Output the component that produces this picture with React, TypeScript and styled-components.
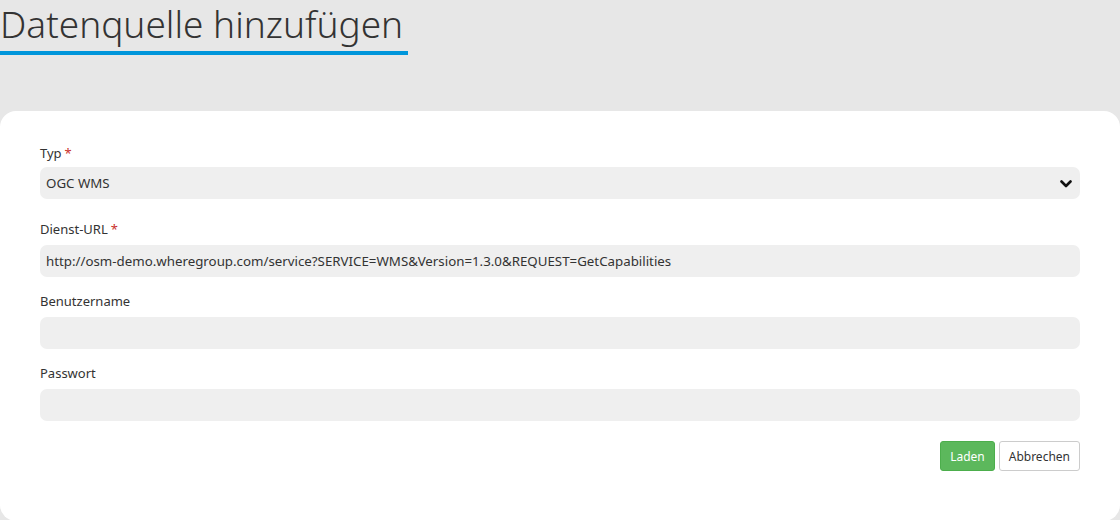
import React from "react";
import styled, { createGlobalStyle } from "styled-components";

const Global = createGlobalStyle`
  html, body { margin: 0; padding: 0; }
  body {
    background: #e7e7e7;
    font-family: "Noto Sans", "Open Sans", sans-serif;
    color: #333;
  }
`;

const Page = styled.div`
  display: flex;
  flex-direction: column;
  align-items: flex-start;
  min-height: 520px;
`;

const TitleWrap = styled.div`
  width: 408px;
  border-bottom: 4px solid #0096db;
`;

const Title = styled.h1`
  margin: 0;
  font-family: "Noto Sans", sans-serif;
  font-weight: 300;
  font-size: 37px;
  line-height: 48px;
  padding-bottom: 3px;
  color: #333;
  white-space: nowrap;
`;

const Card = styled.div`
  align-self: stretch;
  margin-top: 56px;
  background: #fff;
  border-radius: 16px;
  padding: 32px 40px 50px;
  display: flex;
  flex-direction: column;
  gap: 14px;
`;

const Group = styled.div<{ $extra?: number }>`
  display: flex;
  flex-direction: column;
  margin-bottom: ${(p) => p.$extra ?? 0}px;
`;

const Label = styled.label<{ $gap?: number }>`
  font-size: 13px;
  line-height: 20px;
  color: #333;
  margin-bottom: ${(p) => p.$gap ?? 6}px;
`;

const Star = styled.span`
  color: #c9302c;
  margin-left: 3px;
`;

const Field = styled.div`
  position: relative;
  height: 32px;
  background: #efefef;
  border-radius: 7px;
  display: flex;
  align-items: center;
  padding: 0 6px;
  font-size: 13.3px;
  color: #333;
  white-space: nowrap;
`;

const Chevron = styled.svg`
  position: absolute;
  right: 8px;
  top: 13px;
`;

const Actions = styled.div`
  margin-top: 6px;
  display: flex;
  justify-content: flex-end;
  gap: 4px;
`;

const Button = styled.button<{ $primary?: boolean }>`
  height: 30px;
  padding: 0 9px;
  font-family: "Noto Sans", sans-serif;
  font-size: 12px;
  border-radius: 3px;
  border: 1px solid ${(p) => (p.$primary ? "#4cae4c" : "#ccc")};
  background: ${(p) => (p.$primary ? "#5cb85c" : "#fff")};
  color: ${(p) => (p.$primary ? "#fff" : "#333")};
`;

export default function App() {
  return (
    <>
      <Global />
      <Page>
        <TitleWrap>
          <Title>Datenquelle hinzufügen</Title>
        </TitleWrap>
        <Card>
          <Group $extra={6}>
            <Label $gap={4}>
              Typ<Star>*</Star>
            </Label>
            <Field>
              OGC WMS
              <Chevron width="12" height="8" viewBox="0 0 12 8">
                <path d="M1.5 1.5 L6 6 L10.5 1.5" fill="none" stroke="#111" strokeWidth="2.6" strokeLinecap="round" strokeLinejoin="round" />
              </Chevron>
            </Field>
          </Group>
          <Group>
            <Label>
              Dienst-URL<Star>*</Star>
            </Label>
            <Field>http://osm-demo.wheregroup.com/service?SERVICE=WMS&amp;Version=1.3.0&amp;REQUEST=GetCapabilities</Field>
          </Group>
          <Group>
            <Label>Benutzername</Label>
            <Field />
          </Group>
          <Group>
            <Label>Passwort</Label>
            <Field />
          </Group>
          <Actions>
            <Button $primary>Laden</Button>
            <Button>Abbrechen</Button>
          </Actions>
        </Card>
      </Page>
    </>
  );
}
